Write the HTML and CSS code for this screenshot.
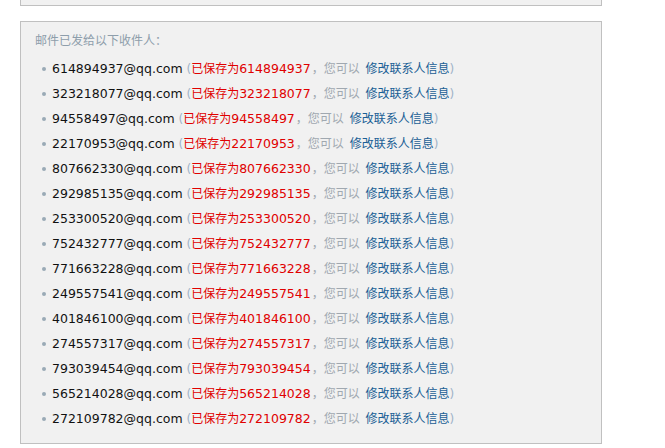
FILE: index.html
```html
<!DOCTYPE html>
<html lang="zh-CN">
<head>
<meta charset="utf-8">
<link rel="stylesheet" href="styles.css">
</head>
<body>
<div class="box box-top"></div>
<div class="box box-main">
  <div class="title">邮件已发给以下收件人：</div>
  <ul class="list">
    <li><span class="mail">614894937@qq.com</span> <span class="paren">(</span><span class="saved">已保存为<span class="num">614894937</span></span><span class="muted">，您可以 </span><a class="link">修改联系人信息</a><span class="paren">)</span></li>
    <li><span class="mail">323218077@qq.com</span> <span class="paren">(</span><span class="saved">已保存为<span class="num">323218077</span></span><span class="muted">，您可以 </span><a class="link">修改联系人信息</a><span class="paren">)</span></li>
    <li><span class="mail">94558497@qq.com</span> <span class="paren">(</span><span class="saved">已保存为<span class="num">94558497</span></span><span class="muted">，您可以 </span><a class="link">修改联系人信息</a><span class="paren">)</span></li>
    <li><span class="mail">22170953@qq.com</span> <span class="paren">(</span><span class="saved">已保存为<span class="num">22170953</span></span><span class="muted">，您可以 </span><a class="link">修改联系人信息</a><span class="paren">)</span></li>
    <li><span class="mail">807662330@qq.com</span> <span class="paren">(</span><span class="saved">已保存为<span class="num">807662330</span></span><span class="muted">，您可以 </span><a class="link">修改联系人信息</a><span class="paren">)</span></li>
    <li><span class="mail">292985135@qq.com</span> <span class="paren">(</span><span class="saved">已保存为<span class="num">292985135</span></span><span class="muted">，您可以 </span><a class="link">修改联系人信息</a><span class="paren">)</span></li>
    <li><span class="mail">253300520@qq.com</span> <span class="paren">(</span><span class="saved">已保存为<span class="num">253300520</span></span><span class="muted">，您可以 </span><a class="link">修改联系人信息</a><span class="paren">)</span></li>
    <li><span class="mail">752432777@qq.com</span> <span class="paren">(</span><span class="saved">已保存为<span class="num">752432777</span></span><span class="muted">，您可以 </span><a class="link">修改联系人信息</a><span class="paren">)</span></li>
    <li><span class="mail">771663228@qq.com</span> <span class="paren">(</span><span class="saved">已保存为<span class="num">771663228</span></span><span class="muted">，您可以 </span><a class="link">修改联系人信息</a><span class="paren">)</span></li>
    <li><span class="mail">249557541@qq.com</span> <span class="paren">(</span><span class="saved">已保存为<span class="num">249557541</span></span><span class="muted">，您可以 </span><a class="link">修改联系人信息</a><span class="paren">)</span></li>
    <li><span class="mail">401846100@qq.com</span> <span class="paren">(</span><span class="saved">已保存为<span class="num">401846100</span></span><span class="muted">，您可以 </span><a class="link">修改联系人信息</a><span class="paren">)</span></li>
    <li><span class="mail">274557317@qq.com</span> <span class="paren">(</span><span class="saved">已保存为<span class="num">274557317</span></span><span class="muted">，您可以 </span><a class="link">修改联系人信息</a><span class="paren">)</span></li>
    <li><span class="mail">793039454@qq.com</span> <span class="paren">(</span><span class="saved">已保存为<span class="num">793039454</span></span><span class="muted">，您可以 </span><a class="link">修改联系人信息</a><span class="paren">)</span></li>
    <li><span class="mail">565214028@qq.com</span> <span class="paren">(</span><span class="saved">已保存为<span class="num">565214028</span></span><span class="muted">，您可以 </span><a class="link">修改联系人信息</a><span class="paren">)</span></li>
    <li><span class="mail">272109782@qq.com</span> <span class="paren">(</span><span class="saved">已保存为<span class="num">272109782</span></span><span class="muted">，您可以 </span><a class="link">修改联系人信息</a><span class="paren">)</span></li>
  </ul>
</div>
</body>
</html>
```
FILE: styles.css
```css
html, body {
  margin: 0;
  padding: 0;
  background: #fff;
}
body {
  font-family: "DejaVu Sans", "Noto Sans CJK SC", sans-serif;
  font-size: 12px;
  color: #000;
}
.box {
  margin-left: 20px;
  width: 580px;
  background: #f1f1f1;
  border: 1px solid #c0c0c0;
}
.box-top {
  border-top: none;
  height: 5px;
}
.box-main {
  margin-top: 15px;
  padding: 9px 14px 12px 14px;
  width: 552px;
}
.title {
  line-height: 20px;
  color: #8e9eab;
}
.list {
  list-style: none;
  margin: 5px 0 0 0;
  padding: 0;
}
.list li {
  line-height: 25px;
  height: 25px;
  white-space: nowrap;
}
.list li::before {
  content: "";
  display: inline-block;
  width: 4px;
  height: 4px;
  border-radius: 50%;
  background: #9aaab6;
  margin: 0 6px 1px 7px;
  vertical-align: middle;
}
.mail {
  color: #111;
  font-size: 12.5px;
}
.paren {
  color: #9fb3c8;
}
.saved {
  color: #e00000;
}
.num {
  font-size: 12.5px;
}
.muted {
  color: #a0a8b0;
  margin-left: 1px;
}
.link {
  color: #1a5f95;
  cursor: pointer;
  margin-left: 2px;
}
```
